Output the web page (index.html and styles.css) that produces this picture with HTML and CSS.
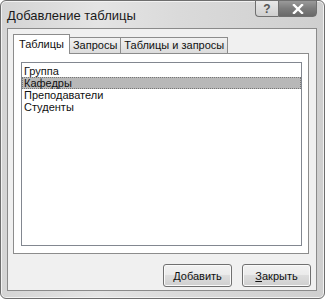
FILE: index.html
```html
<!DOCTYPE html>
<html>
<head>
<meta charset="utf-8">
<link rel="stylesheet" href="styles.css">
</head>
<body>
<div class="window">
  <div class="titlebar">
    <div class="title">Добавление таблицы</div>
    <div class="caption-buttons">
      <div class="cbtn help">?</div>
      <div class="cbtn close">
        <svg width="12" height="10" viewBox="0 0 12 10"><path d="M2 1 L10 9 M10 1 L2 9" stroke="#fff" stroke-width="2.4" stroke-linecap="square"/></svg>
      </div>
    </div>
  </div>
  <div class="client">
    <div class="tabs">
      <div class="tab active">Таблицы</div>
      <div class="tab">Запросы</div>
      <div class="tab">Таблицы и запросы</div>
    </div>
    <div class="panel">
      <div class="listbox">
        <div class="item">Группа</div>
        <div class="item selected">Кафедры</div>
        <div class="item">Преподаватели</div>
        <div class="item">Студенты</div>
      </div>
    </div>
    <div class="actions">
      <div class="btn">Добавить</div>
      <div class="btn"><u>З</u>акрыть</div>
    </div>
  </div>
</div>
</body>
</html>
```
FILE: styles.css
```css
html, body {
  margin: 0;
  padding: 0;
  background: #ffffff;
}
body {
  font-family: "Liberation Sans", Arial, sans-serif;
  font-size: 11px;
  color: #111;
}
.window {
  width: 325px;
  height: 299px;
  box-sizing: border-box;
  border: 1px solid #6e6e6e;
  border-radius: 6px;
  background: linear-gradient(90deg, #d4d4d4 0%, #e4e4e4 30%, #dadada 55%, #cfcfcf 100%);
  display: flex;
  flex-direction: column;
  box-shadow: inset 0 0 0 1px #f2f2f2;
}
.titlebar {
  height: 27px;
  display: flex;
  justify-content: space-between;
  align-items: flex-start;
  padding-left: 6px;
  padding-right: 7px;
}
.title {
  font-size: 13px;
  color: #1a1a1a;
  margin-top: 7px;
}
.caption-buttons {
  display: flex;
  margin-top: -1px;
}
.cbtn {
  height: 17px;
  border: 1px solid #707070;
  box-sizing: border-box;
  display: flex;
  align-items: center;
  justify-content: center;
}
.help {
  width: 23px;
  border-radius: 0 0 0 4px;
  border-right: none;
  background: linear-gradient(#e8e8e8, #cfcfcf);
  color: #555;
  font-size: 12px;
  font-weight: bold;
  line-height: 1;
}
.close {
  width: 39px;
  border-radius: 0 0 4px 0;
  background: linear-gradient(#9a9a9a 0%, #7c7c7c 50%, #6a6a6a 100%);
}
.client {
  flex: 1;
  margin: 0 7px 7px 6px;
  border: 1px solid #8a8a8a;
  background: #f0f0f0;
  padding: 5px 7px 0 5px;
  display: flex;
  flex-direction: column;
}
.tabs {
  display: flex;
  align-items: flex-end;
  height: 19px;
  position: relative;
  z-index: 1;
}
.tab {
  height: 16px;
  box-sizing: border-box;
  border: 1px solid #8c8c8c;
  border-bottom: none;
  margin-left: -1px;
  padding: 0 3px;
  line-height: 15px;
  background: linear-gradient(#f2f2f2, #dcdcdc);
}
.tab.active {
  height: 20px;
  margin-left: 0;
  margin-right: -1px;
  margin-bottom: -1px;
  background: #ffffff;
  padding: 0 5px;
  line-height: 18px;
  position: relative;
  z-index: 2;
}
.tab.active + .tab {
  margin-left: 0;
}
.panel {
  height: 201px;
  box-sizing: border-box;
  border: 1px solid #8c8c8c;
  background: #ffffff;
  padding: 8px 6px 7px 7px;
  display: flex;
}
.listbox {
  flex: 1;
  border: 1px solid #828790;
  background: #fff;
  padding-top: 2px;
}
.item {
  height: 12px;
  line-height: 12px;
  padding-left: 2px;
  box-sizing: border-box;
}
.item.selected {
  background: #b8b8b8;
  border: 1px dotted #777;
  padding-left: 1px;
  line-height: 10px;
}
.actions {
  display: flex;
  justify-content: flex-end;
  gap: 10px;
  margin-top: 10px;
  margin-right: -2px;
}
.btn {
  width: 69px;
  height: 23px;
  box-sizing: border-box;
  border: 1px solid #707070;
  border-radius: 3px;
  background: linear-gradient(#f2f2f2 0%, #ebebeb 45%, #dddddd 50%, #cfcfcf 100%);
  box-shadow: inset 0 0 0 1px #fafafa;
  display: flex;
  align-items: center;
  justify-content: center;
}
.btn u {
  text-decoration: underline;
}
```
